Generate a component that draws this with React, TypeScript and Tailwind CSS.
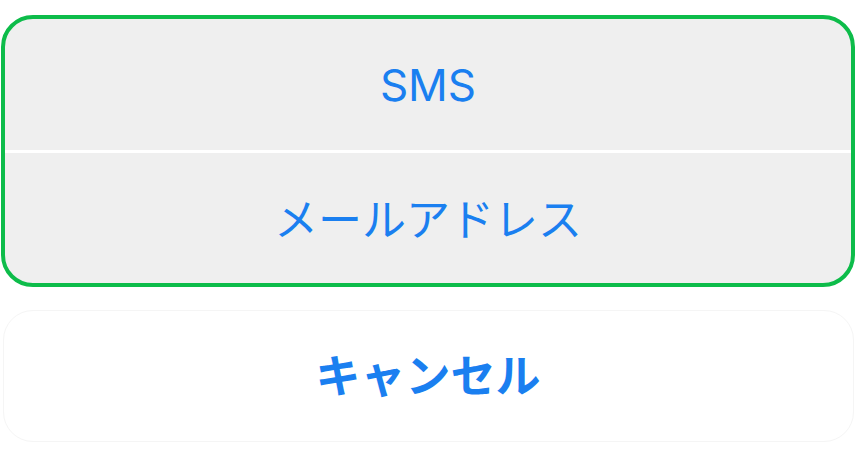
import React from "react";

export default function App() {
  const font = { fontFamily: 'Inter, "Noto Sans CJK JP", sans-serif' };
  return (
    <div className="w-[856px] h-[465px] bg-white flex flex-col items-center pt-[15px]" style={font}>
      <div className="w-[854px] h-[272px] border-[4px] border-[#0dbc4a] rounded-[32px] bg-[#efefef] overflow-hidden flex flex-col">
        <div className="h-[131px] flex items-center justify-center text-[44px] text-[#1a7ff0] leading-none pt-[1px]">
          SMS
        </div>
        <div className="h-[3px] bg-white" />
        <div className="flex-1 flex items-center justify-center text-[44px] text-[#1a7ff0] leading-none pt-[3px]">
          メールアドレス
        </div>
      </div>
      <div className="mt-[23px] w-[851px] h-[132px] border border-[#f5f5f5] rounded-[30px] bg-white flex items-center justify-center text-[45px] font-bold text-[#1a7ff0] leading-none">
        キャンセル
      </div>
    </div>
  );
}
